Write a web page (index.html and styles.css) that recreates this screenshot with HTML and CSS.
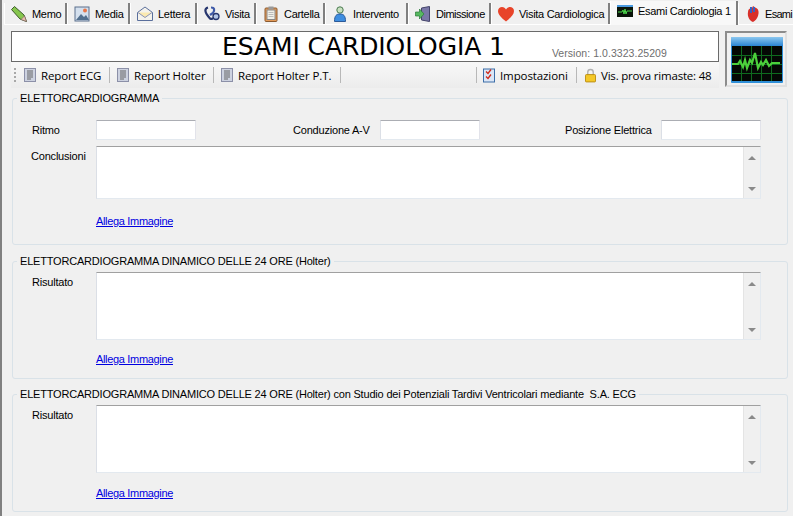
FILE: index.html
```html
<!DOCTYPE html>
<html lang="it">
<head>
<meta charset="utf-8">
<title>Esami Cardiologia 1</title>
<link rel="stylesheet" href="styles.css">
</head>
<body>
<div class="app">
  <nav class="tabs">
    <div class="tab w-memo"><svg class="ti" viewBox="0 0 16 16"><path d="M.5 3.500L3.500.5 13 9l2.500 6.500L9 13z" fill="#86c64e" stroke="#3d5a2c"/><path d="M10 13.500l3.500-3.500 2 5.500z" fill="#e8c0b0" stroke="#806060" stroke-width=".6"/></svg><span>Memo</span></div>
    <div class="tab w-media"><svg class="ti" viewBox="0 0 16 16"><rect x="1" y="1" width="14" height="14" fill="#d4e0ee" stroke="#5a6f8c"/><path d="M2 14l5-6 3 3 2-2 3 5z" fill="#52708f"/><circle cx="11" cy="4.500" r="2" fill="#e8764a"/></svg><span>Media</span></div>
    <div class="tab w-lettera"><svg class="ti" viewBox="0 0 16 16"><path d="M.5 6.500L8 1l7.500 5.500v8H.5z" fill="#f4f2ec" stroke="#5a6f9c"/><path d="M1 6.500l7 5 7-5" fill="#fbe9b0" stroke="#8a94b8"/></svg><span>Lettera</span></div>
    <div class="tab w-visita"><svg class="ti" viewBox="0 0 16 16"><path d="M4 1.500C.5 2.500 0 6 6 12.500c2 1 3 0 3-1" fill="none" stroke="#27366e" stroke-width="2.200"/><path d="M7 1.500c3.500 0 4 2.500 2 5.500L6 9" fill="none" stroke="#3f5aa8" stroke-width="2.200"/><circle cx="12" cy="10.500" r="3" fill="#b4c6e6" stroke="#27366e" stroke-width="1.300"/></svg><span>Visita</span></div>
    <div class="tab w-cartella"><svg class="ti" viewBox="0 0 16 16"><rect x="2" y="2" width="12" height="13.500" rx="1" fill="#e39a58" stroke="#8a5a30"/><rect x="4" y="4" width="8" height="9.500" fill="#f0f0e8" stroke="#888"/><path d="M5.500 6.500h5M5.500 8.500h5M5.500 10.500h5" stroke="#bbb"/><rect x="5.500" y=".5" width="5" height="3" fill="#999"/></svg><span>Cartella</span></div>
    <div class="tab w-intervento"><svg class="ti" viewBox="0 0 16 16"><circle cx="8" cy="4" r="3.200" fill="#c8e0c0" stroke="#4a7a50"/><path d="M2.500 15.500c0-6 2-7.500 5.500-7.500s5.500 1.500 5.500 7.500z" fill="#3f8ee0" stroke="#2c5a98"/></svg><span>Intervento</span></div>
    <div class="tab w-dimissione"><svg class="ti" viewBox="0 0 16 16"><path d="M6.500 2l8-1.500v15l-8-1.500z" fill="#7a78a8" stroke="#44446a"/><path d="M.5 6h4V3l4.500 5-4.500 5v-3h-4z" fill="#56b860" stroke="#2a7a38" stroke-width=".7"/></svg><span>Dimissione</span></div>
    <div class="tab w-vc"><svg class="ti" viewBox="0 0 16 15"><path d="M8 15C3 11 0 8 0 4.500 0 2 2 .500 4 .500c2 0 3 1 4 2.500 1-1.500 2-2.500 4-2.500 2 0 4 1.500 4 4C16 8 13 11 8 15z" fill="#e8442a"/></svg><span>Visita Cardiologica</span></div>
    <div class="tab active w-ec"><svg class="ti" viewBox="0 0 16 16"><rect y="2" width="16" height="12" fill="#0a140a"/><rect y="2" width="16" height="2" fill="#4a9ae0"/><path d="M1 9h4l1-2 1 4 1-5 1 5 1-3h5" fill="none" stroke="#4cd84c"/></svg><span>Esami Cardiologia 1</span></div>
    <div class="tab w-last"><svg class="ti" viewBox="0 0 16 16"><path d="M3 6c0-3 2-4 4-4l1-2 3 2c3 1 3 5 2 8-1 3-3 5-5 6C5 15 2 11 3 6z" fill="#d8302a"/><path d="M6 1v6M9 1v5" stroke="#3a60c0" stroke-width="2"/></svg><span>Esami</span></div>
  </nav>

  <header class="head">
    <div class="head-main">
      <div class="title-box">
        <h1>ESAMI CARDIOLOGIA 1</h1>
        <span class="version">Version: 1.0.3323.25209</span>
      </div>
      <div class="toolbar">
        <span class="grip"></span>
        <div class="tool t1"><svg class="doc" viewBox="0 0 12 14"><rect x=".5" y=".5" width="11" height="13" fill="#cdd2e0" stroke="#8c90a8"/><path d="M3 3h6M3 5h6M3 7h6M3 9h6M3 11h4" stroke="#666"/></svg><span>Report ECG</span></div>
        <div class="tool t2"><svg class="doc" viewBox="0 0 12 14"><rect x=".5" y=".5" width="11" height="13" fill="#cdd2e0" stroke="#8c90a8"/><path d="M3 3h6M3 5h6M3 7h6M3 9h6M3 11h4" stroke="#666"/></svg><span>Report Holter</span></div>
        <div class="tool t3"><svg class="doc" viewBox="0 0 12 14"><rect x=".5" y=".5" width="11" height="13" fill="#cdd2e0" stroke="#8c90a8"/><path d="M3 3h6M3 5h6M3 7h6M3 9h6M3 11h4" stroke="#666"/></svg><span>Report Holter P.T.</span></div>
        <div class="tool t4"><svg class="doc-b" viewBox="0 0 12 14"><rect x=".5" y=".5" width="11" height="13" fill="#dbe6f6" stroke="#3c6ea8"/><path d="M3 3l2 2 3-4M3 8l2 2 3-4" fill="none" stroke="#d02818" stroke-width="1.300"/></svg><span>Impostazioni</span></div>
        <div class="tool t5"><svg class="lock" viewBox="0 0 12 15"><path d="M3 7V4a3 3 0 0 1 6 0v3" fill="none" stroke="#b0b0b0" stroke-width="1.500"/><rect x=".5" y="6.500" width="11" height="8" rx="1" fill="#f4c828" stroke="#b88a10"/></svg><span>Vis. prova rimaste: 48</span></div>
      </div>
    </div>
    <div class="logo-box">
      <svg class="logo" viewBox="0 0 52 46">
        <defs><linearGradient id="cap" x1="0" y1="0" x2="0" y2="1"><stop offset="0" stop-color="#8cc8f0"/><stop offset="1" stop-color="#2a84d4"/></linearGradient></defs>
        <rect width="52" height="46" rx="1" fill="#2f8fd8"/>
        <rect width="52" height="9" fill="url(#cap)"/>
        <rect x="1" y="9" width="50" height="35" fill="#050805"/>
        <path d="M1 18.500h50M1 27.500h50M1 36.500h50M10.500 9v35M20.500 9v35M30.500 9v35M40.500 9v35" stroke="#0e6a1e"/>
        <path d="M1 27h6l2-3 3 6 2-7 2 8 3-8 2 3 3-10 3 15 3-6 2 3 3-5 3 6 3-3h8" fill="none" stroke="#4cd03c" stroke-width="2.200"/>
      </svg>
    </div>
  </header>

  <main class="content">
    <fieldset class="group g1">
      <legend>ELETTORCARDIOGRAMMA</legend>
      <div class="row">
        <label class="lbl-ritmo">Ritmo</label><input class="field" type="text">
        <label class="lbl-cond">Conduzione A-V</label><input class="field" type="text">
        <label class="lbl-pos">Posizione Elettrica</label><input class="field" type="text">
      </div>
      <div class="area-row a1">
        <label>Conclusioni</label>
        <div class="area"><div class="scroll"><i class="up"></i><i class="down"></i></div></div>
      </div>
      <a class="attach" href="#">Allega Immagine</a>
    </fieldset>

    <fieldset class="group g2">
      <legend>ELETTORCARDIOGRAMMA DINAMICO DELLE 24 ORE (Holter)</legend>
      <div class="area-row a2">
        <label>Risultato</label>
        <div class="area"><div class="scroll"><i class="up"></i><i class="down"></i></div></div>
      </div>
      <a class="attach" href="#">Allega Immagine</a>
    </fieldset>

    <fieldset class="group g3">
      <legend>ELETTORCARDIOGRAMMA DINAMICO DELLE 24 ORE (Holter) con Studio dei Potenziali Tardivi Ventricolari mediante  S.A. ECG</legend>
      <div class="area-row a2">
        <label>Risultato</label>
        <div class="area"><div class="scroll"><i class="up"></i><i class="down"></i></div></div>
      </div>
      <a class="attach" href="#">Allega Immagine</a>
    </fieldset>
  </main>
</div>
</body>
</html>
```

FILE: styles.css
```css
* { box-sizing: border-box; }
html, body { margin: 0; padding: 0; }
body {
  width: 793px;
  height: 516px;
  overflow: hidden;
  background: #f0f0f0;
  font-family: "Liberation Sans", Arial, sans-serif;
  font-size: 11px;
  color: #000;
}
.app {
  height: 516px;
  padding-left: 2px;
  border-left: 2px solid #808080;
  display: flex;
  flex-direction: column;
  overflow: hidden;
}

/* tabs */
.tabs {
  display: flex;
  height: 25px;
  padding: 3px 0 0 0;
  border-bottom: 1px solid #fff;
  white-space: nowrap;
}
.tab {
  display: flex;
  align-items: center;
  flex: none;
  height: 21px;
  padding-left: 6px;
  gap: 5px;
  border-left: 1px solid #fff;
  border-right: 2px solid #7f7f7f;
  background: #f0f0f0;
  letter-spacing: -.3px;
}
.tab.active {
  height: 24px;
  margin-top: -2px;
  padding-bottom: 5px;
  background: #f8f8f8;
}
.tab.w-last { border-right: 0; gap: 4px; letter-spacing: -.7px; }
.ti { width: 16px; height: 16px; flex: none; }
.w-memo { width: 63px; }
.w-media { width: 63px; }
.w-lettera { width: 67px; }
.w-visita { width: 59px; }
.w-cartella { width: 69px; }
.w-intervento { width: 83px; }
.w-dimissione { width: 83px; letter-spacing: -.5px; }
.w-vc { width: 119px; }
.w-ec { width: 128px; }
.w-last { width: 55px; }

/* header */
.head {
  display: flex;
  margin: 6px 0 0 7px;
  height: 57px;
}
.head-main { width: 708px; display: flex; flex-direction: column; }
.title-box {
  height: 31px;
  background: #fff;
  border: 1px solid #6a6a6a;
  display: flex;
  align-items: center;
  padding-left: 210px;
}
.title-box h1 {
  margin: 0;
  font: 400 25px/29px "DejaVu Sans", Verdana, sans-serif;
  letter-spacing: -.1px;
}
.version {
  margin: 13px 0 0 47px;
  font-size: 10.500px;
  letter-spacing: .05px;
  color: #6e6e6e;
}
.toolbar {
  height: 26px;
  display: flex;
  align-items: center;
  background: linear-gradient(#f8f8f8, #ececec);
  font-family: "Open Sans", sans-serif;
  font-size: 11.500px;
  padding-left: 3px;
  white-space: nowrap;
}
.grip {
  width: 2px;
  height: 14px;
  margin-right: 8px;
  background: repeating-linear-gradient(#a8a8a8 0 2px, transparent 2px 4px);
}
.tool {
  display: flex;
  align-items: center;
  gap: 5px;
  height: 16px;
  border-right: 1px solid #b8b8b8;
  flex: none;
  letter-spacing: -.1px;
}
.doc { width: 12px; height: 14px; flex: none; }
.doc-b { width: 12px; height: 15px; flex: none; }
.lock { width: 11px; height: 15px; flex: none; }
.t1 { width: 86px; }
.t2 { width: 104px; padding-left: 7px; }
.t3 { width: 127px; padding-left: 7px; }
.t4 { width: 101px; margin-left: 135px; padding-left: 6px; border-left: 1px solid #b8b8b8; }
.t5 { width: 134px; padding-left: 8px; border-right: 0; letter-spacing: -.2px; }

.logo-box {
  width: 62px;
  height: 56px;
  margin-left: 6px;
  border: 2px solid;
  border-color: #8c8c8c #e0e0e0 #e0e0e0 #8c8c8c;
  padding: 4px;
}
.logo { display: block; width: 52px; height: 46px; }

/* groups */
.content {
  display: flex;
  flex-direction: column;
  margin: 3px 0 0 8px;
  width: 776px;
}
.group {
  margin: 0;
  padding: 0;
  border: 1px solid #d9e2e8;
  border-radius: 3px;
}
.group legend {
  margin-left: 4px;
  padding: 0 3px;
  height: 14px;
  line-height: 14px;
  white-space: pre;
  letter-spacing: -.19px;
}
.g1 { height: 154px; }
.g2 { height: 125px; margin-top: 9px; }
.g3 { height: 125px; margin-top: 8px; }
.row {
  display: flex;
  align-items: center;
  margin-top: 15px;
  padding-left: 19px;
  height: 20px;
}
label { letter-spacing: -.2px; display: block; }
.lbl-ritmo { width: 64px; }
.lbl-cond { width: 87px; margin-left: 97px; }
.lbl-pos { width: 96px; margin-left: 85px; }
.field {
  width: 100px;
  height: 20px;
  padding: 0;
  background: #fff;
  border: 1px solid;
  border-color: #abadb3 #e2e3ea #e3e9ef #dbdfe6;
  border-radius: 1px;
  outline: 0;
}
.area-row {
  display: flex;
  margin-top: 6px;
  padding-left: 18px;
}
.area-row label { width: 65px; padding-top: 4px; }
.area {
  width: 665px;
  background: #fff;
  border: 1px solid;
  border-color: #a0a0a0 #e3e9ef #e3e9ef #dbdfe6;
  display: flex;
  justify-content: flex-end;
}
.a1 .area { height: 53px; }
.a2 { margin-top: 4px; }
.a2 label { padding-left: 1px; }
.a2 .area { height: 68px; }
.scroll {
  width: 17px;
  height: 100%;
  background: #f0f0f0;
  border-left: 1px solid #e4e4e4;
  display: flex;
  flex-direction: column;
  justify-content: space-between;
  align-items: center;
  padding: 9px 0 7px;
}
.up, .down { width: 0; height: 0; border: 4px solid transparent; }
.up { border-top: 0; border-bottom-color: #8a8a8a; }
.down { border-bottom: 0; border-top-color: #8a8a8a; }
.attach {
  display: block;
  width: max-content;
  margin: 15px 0 0 83px;
  line-height: 14px;
  color: #0000e0;
  letter-spacing: -.33px;
}
.g2 .attach { margin-top: 12px; }
.g3 .attach { margin-top: 13px; }
```
